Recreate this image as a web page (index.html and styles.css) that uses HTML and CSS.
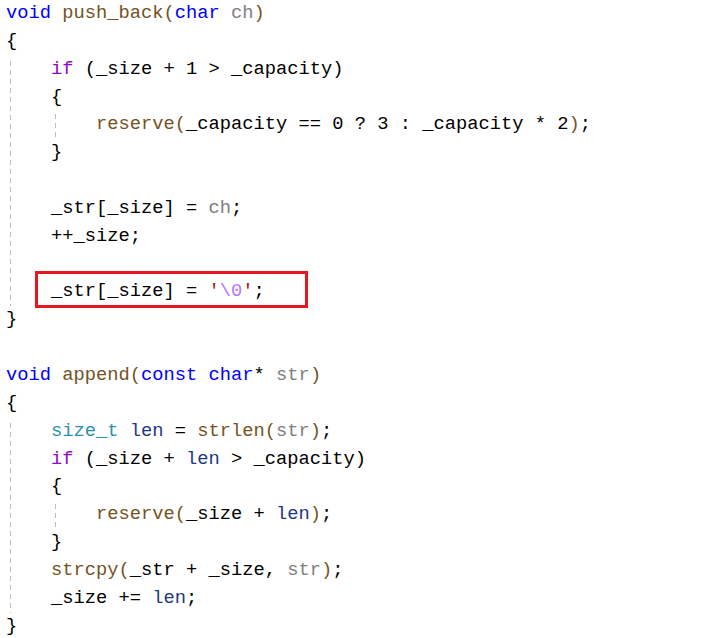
FILE: index.html
```html
<!DOCTYPE html>
<html lang="en">
<head>
<meta charset="utf-8">
<title>push_back / append</title>
<link rel="stylesheet" href="styles.css">
</head>
<body>
<div class="code">
  <div class="fn">
    <div class="line"><span class="kw">void</span> <span class="func">push_back(</span><span class="kw">char</span> <span class="param">ch</span><span class="func">)</span></div>
    <div class="line">{</div>
    <div class="body">
      <div class="line"><span class="ctrl">if</span> (_size + 1 &gt; _capacity)</div>
      <div class="line">{</div>
      <div class="body">
        <div class="line"><span class="func">reserve(</span>_capacity == 0 ? 3 : _capacity * 2<span class="func">)</span>;</div>
      </div>
      <div class="line">}</div>
      <div class="line"></div>
      <div class="line">_str[_size] = <span class="param">ch</span>;</div>
      <div class="line">++_size;</div>
      <div class="line"></div>
      <div class="line marked">_str[_size] = <span class="chr">'</span><span class="esc">\0</span><span class="chr">'</span>;<span class="annot"></span></div>
    </div>
    <div class="line">}</div>
  </div>
  <div class="line"></div>
  <div class="fn">
    <div class="line"><span class="kw">void</span> <span class="func">append(</span><span class="kw">const</span> <span class="kw">char</span>* <span class="param">str</span><span class="func">)</span></div>
    <div class="line">{</div>
    <div class="body">
      <div class="line"><span class="type">size_t</span> <span class="local">len</span> = <span class="func">strlen(</span><span class="param">str</span><span class="func">)</span>;</div>
      <div class="line"><span class="ctrl">if</span> (_size + <span class="local">len</span> &gt; _capacity)</div>
      <div class="line">{</div>
      <div class="body">
        <div class="line"><span class="func">reserve(</span>_size + <span class="local">len</span><span class="func">)</span>;</div>
      </div>
      <div class="line">}</div>
      <div class="line"><span class="func">strcpy(</span>_str + _size, <span class="param">str</span><span class="func">)</span>;</div>
      <div class="line">_size += <span class="local">len</span>;</div>
    </div>
    <div class="line">}</div>
  </div>
</div>
</body>
</html>
```

FILE: styles.css
```css
html, body {
  margin: 0;
  padding: 0;
  background: #ffffff;
}

.code {
  padding-left: 6px;
  font-family: "Liberation Mono", "DejaVu Sans Mono", monospace;
  font-size: 18.75px;
  line-height: 27.85px;
  color: #000000;
}

.line {
  height: 27.85px;
  white-space: pre;
}

.body {
  padding-left: 45px;
  background-image: repeating-linear-gradient(to bottom, #bdbdbd 0 5px, transparent 5px 9px);
  background-repeat: no-repeat;
  background-position: 4px 5px;
  background-size: 1px calc(100% - 5px);
}

.body .body {
  background-position: 4px 3px;
  background-size: 1px calc(100% - 3px);
}

.kw { color: #0000ff; }
.func { color: #74531f; }
.param { color: #808080; }
.ctrl { color: #8f08c4; }
.type { color: #2b91af; }
.local { color: #1f377f; }
.chr { color: #a31515; }
.esc { color: #b776fb; }

.marked {
  position: relative;
}

.annot {
  position: absolute;
  left: -16px;
  top: -7px;
  width: 273px;
  height: 37px;
  box-sizing: border-box;
  border: 3px solid #e8161f;
}
```
